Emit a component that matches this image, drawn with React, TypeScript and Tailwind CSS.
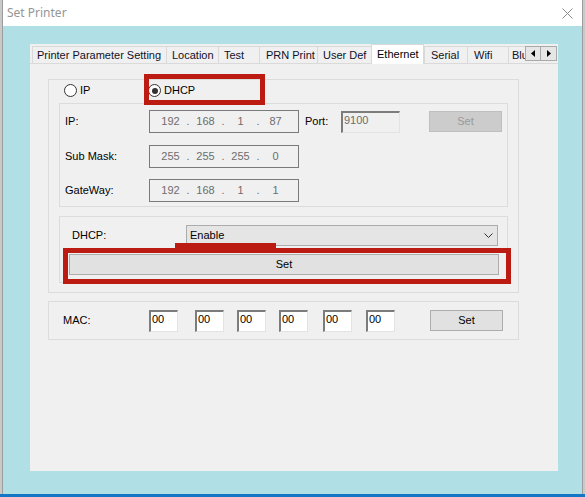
import React from 'react';

const tabs = [
    {label: "Printer Parameter Setting", w: "w-[134px]", pl: "pl-[4px]"},
    {label: "Location", w: "w-[52px]", pl: "pl-[5px]"},
    {label: "Test", w: "w-[41px]", pl: "pl-[5px]"},
    {label: "PRN Print", w: "w-[58px]", pl: "pl-[6px]"},
    {label: "User Def", w: "w-[54px]", pl: "pl-[5px]"},
    {label: "Ethernet", w: "w-[53px]", pl: "pl-[5px]", active: true},
    {label: "Serial", w: "w-[43px]", pl: "pl-[6px]"},
    {label: "Wifi", w: "w-[41px]", pl: "pl-[6px]"},
    {label: "Bluetooth", w: "w-[17px]", pl: "pl-[3px]"},
];

const IpBox = ({parts}: { parts: string[] }) => {
    return (
        <div className="w-[150px] h-[23px] border border-[#7a7a7a] flex items-center pl-[5px] text-[#6d6d6d]">
            {parts.map((p, i) => (
                <React.Fragment key={i}>
                    {i > 0 && <span className="w-[4px] text-center">.</span>}
                    <span className="w-[31px] text-center">{p}</span>
                </React.Fragment>
            ))}
        </div>
    );
};

const Radio = ({label, checked}: { label: string; checked?: boolean }) => {
    return (
        <div className="flex items-center">
            <div className="w-[13px] h-[13px] rounded-full border border-[#333333] bg-white flex items-center justify-center">
                {checked ? <div className="w-[6px] h-[6px] rounded-full bg-[#333333]"/> : null}
            </div>
            <span className="ml-[3px]">{label}</span>
        </div>
    );
};

const MacField = ({className}: { className: string }) => (
    <div className={`w-[29px] h-[22px] bg-white border-t-2 border-l-2 border-t-[#7c7c7c] border-l-[#7c7c7c] border-r border-b border-r-[#e3e3e3] border-b-[#e3e3e3] pl-[1px] leading-[14px] text-black ${className}`}>
        00
    </div>
);

const App = () => {
    return (
        <div className="w-[585px] h-[497px] overflow-hidden flex flex-col bg-[#c9c9c9] font-['Liberation_Sans',Arial,sans-serif] text-[11px] text-black">
            <div className="h-[494px] flex">
                <div className="ml-[2px] w-[581px] h-[494px] border-x border-[#9c9c9c] bg-[#b0e0e6] flex flex-col">
                    {/* title bar */}
                    <div className="h-[26px] bg-white flex items-center justify-between pl-[4px] pr-[9px]">
                        <span className="font-['Noto_Sans',sans-serif] text-[12px] text-[#959595]">Set Printer</span>
                        <svg width="11" height="11" viewBox="0 0 11 11">
                            <path d="M0.5 0.5 L10.5 10.5 M10.5 0.5 L0.5 10.5" stroke="#8a8a8a" strokeWidth="1"/>
                        </svg>
                    </div>

                    <div className="pt-[18px] pl-[27px]">
                        <div className="w-[528px] h-[427px] bg-[#f0f0f0] flex flex-col">
                            {/* tab strip */}
                            <div className="h-[19px] flex items-end pl-[2px]">
                                {tabs.map((t) => (
                                    t.active ? (
                                        <div key={t.label}
                                             className={`${t.w} ${t.pl} h-[20px] -mb-[1px] bg-white border border-b-0 border-[#d9d9d9] relative z-10 flex items-center whitespace-nowrap overflow-hidden`}>
                                            {t.label}
                                        </div>
                                    ) : (
                                        <div key={t.label}
                                             className={`${t.w} ${t.pl} h-[17px] border-t border-l border-[#d9d9d9] flex items-center whitespace-nowrap overflow-hidden text-[#101028]`}>
                                            {t.label}
                                        </div>
                                    )
                                ))}
                                <div className="self-start mt-[2px] flex">
                                    <div className="w-[16px] h-[15px] bg-[#e6e6e6] border border-[#a9a9a9] flex items-center justify-center">
                                        <svg width="4" height="7" viewBox="0 0 4 7"><path d="M4 0 L0 3.5 L4 7 Z" fill="#000"/></svg>
                                    </div>
                                    <div className="w-[16px] h-[15px] bg-[#e6e6e6] border border-l-0 border-[#a9a9a9] flex items-center justify-center">
                                        <svg width="4" height="7" viewBox="0 0 4 7"><path d="M0 0 L4 3.5 L0 7 Z" fill="#000"/></svg>
                                    </div>
                                </div>
                            </div>

                            {/* ethernet pane */}
                            <div className="flex-1 border-t border-[#dadada] relative pl-[18px] pt-[15px]">
                                <div className="w-[471px] h-[214px] border border-[#dcdcdc] flex flex-col">
                                    <div className="h-[21px] flex items-center pl-[15px]">
                                        <div className="w-[84px]">
                                            <Radio label="IP"/>
                                        </div>
                                        <Radio label="DHCP" checked/>
                                    </div>

                                    <div className="ml-[10px] mt-[2px] w-[449px] h-[104px] border border-[#dcdcdc] pl-[5px] pt-[6px] flex flex-col">
                                        <div className="flex items-start">
                                            <div className="w-[84px] h-[23px] flex items-center">IP:</div>
                                            <IpBox parts={["192", "168", "1", "87"]}/>
                                            <div className="ml-[6px] w-[36px] h-[23px] flex items-center">Port:</div>
                                            <div className="mt-[1px] w-[59px] h-[22px] bg-[#f0f0f0] border-t-2 border-l-2 border-t-[#7c7c7c] border-l-[#7c7c7c] border-r border-b border-r-[#e3e3e3] border-b-[#e3e3e3] pl-[1px] leading-[14px] text-[#6d6d6d]">
                                                9100
                                            </div>
                                            <div className="ml-[29px] mt-[1px] w-[73px] h-[21px] bg-[#cccccc] border border-[#bfbfbf] flex items-center justify-center text-[#9a9a9a]">
                                                Set
                                            </div>
                                        </div>
                                        <div className="flex items-center mt-[12px]">
                                            <div className="w-[84px]">Sub Mask:</div>
                                            <IpBox parts={["255", "255", "255", "0"]}/>
                                        </div>
                                        <div className="flex items-center mt-[11px]">
                                            <div className="w-[84px]">GateWay:</div>
                                            <IpBox parts={["192", "168", "1", "1"]}/>
                                        </div>
                                    </div>

                                    <div className="ml-[10px] mt-[9px] w-[449px] h-[67px] border border-[#dcdcdc] pt-[8px] flex flex-col">
                                        <div className="flex items-center">
                                            <div className="pl-[12px] w-[126px]">DHCP:</div>
                                            <div className="w-[312px] h-[21px] bg-[#e5e5e5] border border-[#acacac] flex items-center justify-between pl-[3px] pr-[4px]">
                                                <span>Enable</span>
                                                <svg width="9" height="5" viewBox="0 0 9 5">
                                                    <path d="M0.5 0.5 L4.5 4.5 L8.5 0.5" stroke="#333" strokeWidth="1" fill="none"/>
                                                </svg>
                                            </div>
                                        </div>
                                        <div className="ml-[9px] mt-[8px] w-[430px] h-[21px] bg-[#e1e1e1] border border-[#adadad] flex items-center justify-center">
                                            Set
                                        </div>
                                    </div>
                                </div>

                                <div className="mt-[8px] w-[471px] h-[39px] border border-[#dcdcdc] flex items-center pl-[14px]">
                                    <div className="w-[86px]">MAC:</div>
                                    <MacField className=""/>
                                    <MacField className="ml-[17px]"/>
                                    <MacField className="ml-[13px]"/>
                                    <MacField className="ml-[13px]"/>
                                    <MacField className="ml-[15px]"/>
                                    <MacField className="ml-[14px]"/>
                                    <div className="ml-[35px] w-[73px] h-[21px] bg-[#e1e1e1] border border-[#adadad] flex items-center justify-center">
                                        Set
                                    </div>
                                </div>

                                {/* red highlight boxes */}
                                <div className="absolute left-[114px] top-[10px] w-[121px] h-[31px] border-[5px] border-[#bb1b10]"/>
                                <div className="absolute left-[145px] top-[179px] w-[101px] h-[5px] bg-[#bb1b10]"/>
                                <div className="absolute left-[33px] top-[184px] w-[448px] h-[36px] border-[5px] border-[#bb1b10]"/>
                            </div>
                        </div>
                    </div>
                </div>
            </div>
            <div className="h-[3px] bg-[#1377c6]"/>
        </div>
    );
};

export default App;
